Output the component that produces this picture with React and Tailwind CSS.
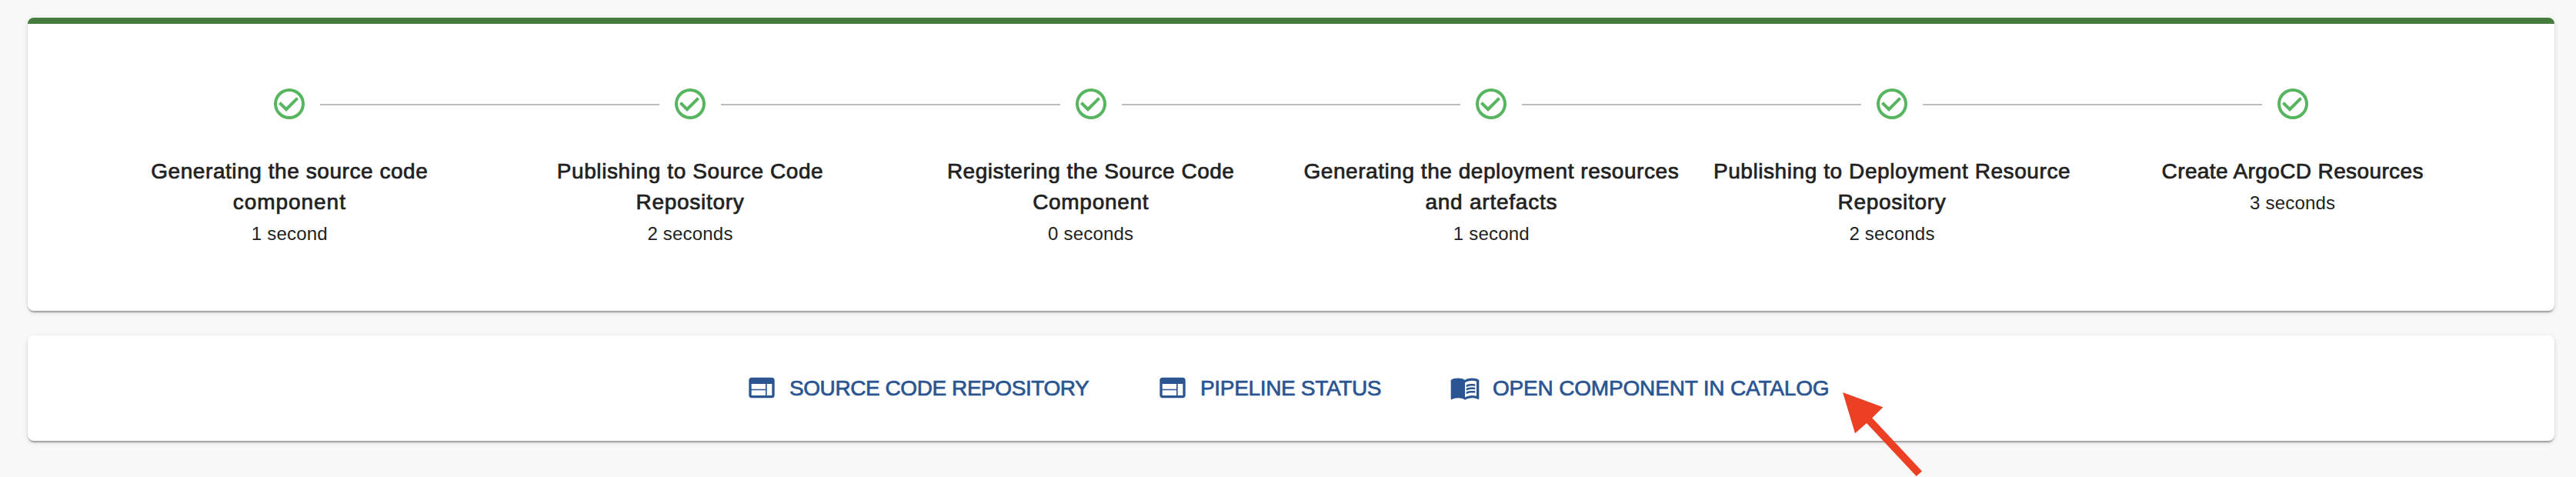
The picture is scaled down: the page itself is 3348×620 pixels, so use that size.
import { MdMenuBook, MdWeb } from "react-icons/md";

const steps = [
  {
    label: [
      ["Generating the source code", "tracking-[0.56px]"],
      ["component", "tracking-[0.95px]"],
    ],
    time: "1 second",
  },
  {
    label: [
      ["Publishing to Source Code", "tracking-[0.6px]"],
      ["Repository", "tracking-[0.7px]"],
    ],
    time: "2 seconds",
  },
  {
    label: [
      ["Registering the Source Code", "tracking-[0.52px]"],
      ["Component", "tracking-[0.7px]"],
    ],
    time: "0 seconds",
  },
  {
    label: [
      ["Generating the deployment resources", "tracking-[0.55px]"],
      ["and artefacts", "tracking-[0.77px]"],
    ],
    time: "1 second",
  },
  {
    label: [
      ["Publishing to Deployment Resource", "tracking-[0.58px]"],
      ["Repository", "tracking-[0.7px]"],
    ],
    time: "2 seconds",
  },
  { label: [["Create ArgoCD Resources", "tracking-[0.38px]"]], time: "3 seconds" },
];

const links = [
  { text: "SOURCE CODE REPOSITORY", Icon: MdWeb, size: "w-[448px] tracking-[-0.43px]" },
  { text: "PIPELINE STATUS", Icon: MdWeb, size: "w-[294px] tracking-[-0.33px]" },
  { text: "OPEN COMPONENT IN CATALOG", Icon: MdMenuBook, size: "w-[496px] tracking-[-0.18px]" },
];

const cardShadow =
  "shadow-[0_4px_2px_-2px_rgba(0,0,0,0.2),0_2px_2px_0_rgba(0,0,0,0.14),0_2px_6px_0_rgba(0,0,0,0.12)]";

function CheckIcon() {
  return (
    <svg className="size-12 shrink-0 fill-[#57b560]" viewBox="0 0 24 24">
      <path d="M20 12a8 8 0 0 1-8 8 8 8 0 0 1-8-8 8 8 0 0 1 8-8 8 8 0 0 1 8 8m2 0A10 10 0 0 0 12 2 10 10 0 0 0 2 12a10 10 0 0 0 10 10 10 10 0 0 0 10-10" />
      <path d="M10 17l-5-5 1.41-1.42L10 14.17l6.59-6.59L18 9z" />
    </svg>
  );
}

function Step({ step, first, last }) {
  return (
    <li className="flex flex-1 flex-col items-center">
      <div className="flex w-full items-center">
        <div className={`mt-0.5 mr-4 h-0.5 flex-1 ${first ? "" : "bg-[#bdbdbd]"}`} />
        <CheckIcon />
        <div className={`mt-0.5 ml-4 h-0.5 flex-1 ${last ? "" : "bg-[#bdbdbd]"}`} />
      </div>
      <div className="mt-11 text-center text-[28px] leading-10 whitespace-nowrap [-webkit-text-stroke:0.7px_#212121]">
        {step.label.map(([line, tracking]) => (
          <div key={line} className={tracking}>
            {line}
          </div>
        ))}
      </div>
      <div className="mt-px text-2xl leading-10 tracking-[0.2px]">{step.time}</div>
    </li>
  );
}

export default function App() {
  return (
    <main className="relative flex h-[620px] w-[3348px] flex-col gap-8 overflow-hidden bg-[#f8f8f8] pt-[23px] pr-7 pl-9 font-['Liberation_Sans',Arial,sans-serif] text-[#212121]">
      <section className={`h-[381px] shrink-0 overflow-hidden rounded-lg bg-white ${cardShadow}`}>
        <div className="h-2 bg-[#467d3e]" />
        <ol className="flex px-20 pt-20">
          {steps.map((step, i) => (
            <Step key={i} step={step} first={i === 0} last={i === steps.length - 1} />
          ))}
        </ol>
      </section>
      <section
        className={`flex h-[137px] shrink-0 items-start gap-[86px] rounded-lg bg-white pt-12 pl-[934px] ${cardShadow}`}
      >
        {links.map(({ text, Icon, size }) => (
          <a
            key={text}
            className={`flex shrink-0 items-start gap-4 text-[28px] leading-[42px] whitespace-nowrap text-[#2a5591] [-webkit-text-stroke:0.7px_#2a5591] ${size}`}
          >
            <Icon className="size-10 shrink-0 [-webkit-text-stroke:0]" />
            <span>{text}</span>
          </a>
        ))}
      </section>
      <svg className="absolute top-[500px] left-[2380px] h-[120px] w-[130px]" viewBox="2380 500 130 120">
        <path
          d="M2395 510 2447.3 529.3 2433.3 543.2 2498 612.5 2490.7 619 2426 550 2411 563.3Z"
          fill="#ec4024"
        />
      </svg>
    </main>
  );
}
